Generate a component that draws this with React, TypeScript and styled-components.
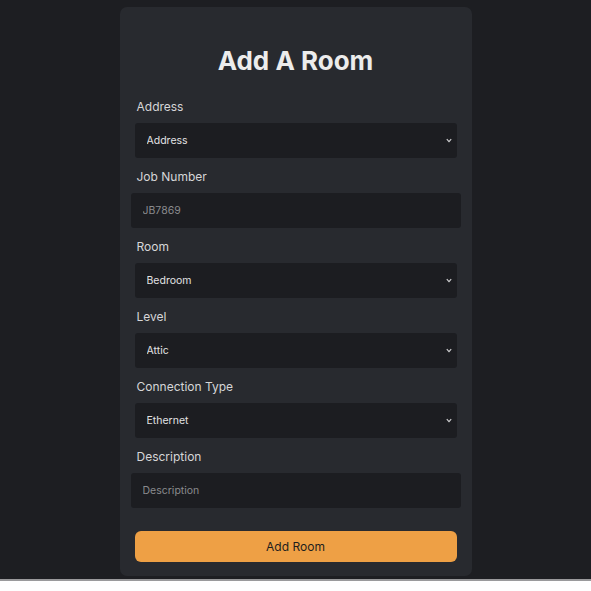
import React from 'react';
import styled, { createGlobalStyle } from 'styled-components';

const GlobalStyle = createGlobalStyle`
  html, body {
    margin: 0;
    padding: 0;
    background: #ffffff;
  }
  * {
    box-sizing: border-box;
  }
`;

const Page = styled.div`
  height: 581px;
  background: #1d1e22;
  border-bottom: 2px solid #9a9a9c;
  padding-top: 7px;
  font-family: Inter, "Noto Sans", sans-serif;
`;

const Card = styled.form`
  width: 352px;
  margin: 0 auto;
  background: #282a2f;
  border-radius: 7px;
  padding: 38px 15px 14px;
  display: flex;
  flex-direction: column;
`;

const Title = styled.h1`
  margin: 0 0 21px;
  font-size: 26px;
  line-height: 32px;
  font-weight: 700;
  color: #ececec;
  text-align: center;
`;

const Field = styled.div`
  display: flex;
  flex-direction: column;
  margin-bottom: 10px;
`;

const Label = styled.label`
  font-size: 12px;
  line-height: 18px;
  color: #d6d6d8;
  padding-left: 2px;
  margin-bottom: 7px;
`;

const SelectWrap = styled.div`
  position: relative;
  height: 35px;
`;

const Select = styled.select`
  display: block;
  appearance: none;
  width: 100%;
  height: 35px;
  border: none;
  border-radius: 3px;
  background: #1c1d21;
  color: #e2e2e4;
  font-family: Inter, "Noto Sans", sans-serif;
  font-size: 10.5px;
  padding: 0 12px;
  outline: none;
`;

const Chevron = styled.svg`
  position: absolute;
  right: 5px;
  top: 15px;
  width: 6px;
  height: 5px;
  pointer-events: none;
`;

const Input = styled.input`
  height: 35px;
  margin: 0 -4px;
  border: none;
  border-radius: 3px;
  background: #1c1d21;
  color: #e2e2e4;
  font-family: Inter, "Noto Sans", sans-serif;
  font-size: 10.5px;
  padding: 0 12px;
  outline: none;

  &::placeholder {
    color: #8a8b8e;
  }
`;

const SubmitButton = styled.button`
  margin-top: 13px;
  height: 31px;
  border: none;
  border-radius: 6px;
  background: #eea045;
  color: #1e1e1e;
  font-family: Inter, "Noto Sans", sans-serif;
  font-size: 12px;
  cursor: pointer;
`;

type SelectProps = { label: string; value: string };

function SelectField({ label, value }: SelectProps) {
  return (
    <Field>
      <Label>{label}</Label>
      <SelectWrap>
        <Select defaultValue={value}>
          <option value={value}>{value}</option>
        </Select>
        <Chevron viewBox="0 0 6 5">
          <path d="M0.8 1.2 L3 3.6 L5.2 1.2" fill="none" stroke="#d0d0d2" strokeWidth="1.2" />
        </Chevron>
      </SelectWrap>
    </Field>
  );
}

type InputProps = { label: string; placeholder: string };

function InputField({ label, placeholder }: InputProps) {
  return (
    <Field>
      <Label>{label}</Label>
      <Input placeholder={placeholder} />
    </Field>
  );
}

export default function App() {
  return (
    <>
      <GlobalStyle />
      <Page>
        <Card onSubmit={(e) => e.preventDefault()}>
          <Title>Add A Room</Title>
          <SelectField label="Address" value="Address" />
          <InputField label="Job Number" placeholder="JB7869" />
          <SelectField label="Room" value="Bedroom" />
          <SelectField label="Level" value="Attic" />
          <SelectField label="Connection Type" value="Ethernet" />
          <InputField label="Description" placeholder="Description" />
          <SubmitButton type="submit">Add Room</SubmitButton>
        </Card>
      </Page>
    </>
  );
}
